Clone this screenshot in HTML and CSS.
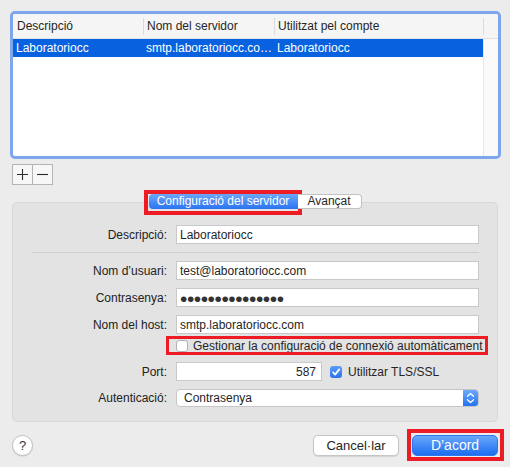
FILE: index.html
```html
<!DOCTYPE html>
<html>
<head>
<meta charset="utf-8">
<link rel="stylesheet" href="styles.css">
</head>
<body>
<div class="win">
  <div class="table">
    <div class="thead">
      <div class="th c1">Descripció</div>
      <div class="th c2">Nom del servidor</div>
      <div class="th c3">Utilitzat pel compte</div>
      <div class="th c4"></div>
    </div>
    <div class="tbody">
      <div class="rows">
        <div class="tr sel">
          <div class="td c1">Laboratoriocc</div>
          <div class="td c2">smtp.laboratoriocc.co…</div>
          <div class="td c3">Laboratoriocc</div>
        </div>
      </div>
      <div class="filler"></div>
    </div>
  </div>

  <div class="addrem">
    <div class="sq first">
      <svg width="11" height="11" viewBox="0 0 11 11"><path d="M5.5 0V11M0 5.5H11" stroke="#2a2a2a" stroke-width="1.1" fill="none"/></svg>
    </div>
    <div class="sq">
      <svg width="11" height="11" viewBox="0 0 11 11"><path d="M0 5.5H11" stroke="#2a2a2a" stroke-width="1.1" fill="none"/></svg>
    </div>
  </div>

  <div class="tabs">
    <div class="tab sel">Configuració del servidor</div>
    <div class="tab adv">Avançat</div>
  </div>

  <div class="box">
    <div class="row">
      <div class="lbl">Descripció:</div>
      <div class="field">Laboratoriocc</div>
    </div>
    <div class="sep"></div>
    <div class="row">
      <div class="lbl">Nom d’usuari:</div>
      <div class="field">test@laboratoriocc.com</div>
    </div>
    <div class="row mt8">
      <div class="lbl">Contrasenya:</div>
      <div class="field"><span class="dots">•••••••••••••••</span></div>
    </div>
    <div class="row mt8">
      <div class="lbl">Nom del host:</div>
      <div class="field">smtp.laboratoriocc.com</div>
    </div>
    <div class="row chkrow">
      <div class="lbl"></div>
      <div class="chkline">
        <span class="chk"></span>
        <span>Gestionar la configuració de connexió automàticament</span>
      </div>
    </div>
    <div class="row portrow">
      <div class="lbl">Port:</div>
      <div class="portline">
        <div class="field port">587</div>
        <span class="chk on">
          <svg width="12" height="12" viewBox="0 0 12 12"><path d="M3 6.3L5.1 8.6L9.2 3.4" stroke="#fff" stroke-width="1.7" fill="none" stroke-linecap="round" stroke-linejoin="round"/></svg>
        </span>
        <span class="tls">Utilitzar TLS/SSL</span>
      </div>
    </div>
    <div class="row mt8">
      <div class="lbl">Autenticació:</div>
      <div class="popup">
        <span class="ptext">Contrasenya</span>
        <span class="stepper">
          <svg width="15" height="16" viewBox="0 0 15 16"><path d="M4.5 6.2L7.5 3.4L10.5 6.2M4.5 9.8L7.5 12.6L10.5 9.8" stroke="#fff" stroke-width="1.3" fill="none" stroke-linecap="round" stroke-linejoin="round"/></svg>
        </span>
      </div>
    </div>
  </div>

  <div class="footer">
    <div class="help">?</div>
    <div class="spacer"></div>
    <div class="btn cancel">Cancel·lar</div>
    <div class="btn ok">D’acord</div>
  </div>

  <div class="mark m1"></div>
  <div class="mark m2"></div>
  <div class="mark m3"></div>
</div>
</body>
</html>
```
FILE: styles.css
```css
* { box-sizing: border-box; }
html, body { margin: 0; padding: 0; }
body {
  background: #ececec;
  font-family: "Liberation Sans", Arial, sans-serif;
  font-size: 12px;
  color: #262626;
}
.win {
  position: relative;
  width: 510px;
  height: 467px;
  overflow: hidden;
}

/* table */
.table {
  margin: 11px 0 0 10px;
  width: 491px;
  height: 148px;
  border: 3px solid #7ea6ec;
  border-radius: 5px;
  background: #fff;
  display: flex;
  flex-direction: column;
  overflow: hidden;
}
.thead {
  display: flex;
  align-items: center;
  height: 25px;
  flex: none;
  background: #f5f5f5;
  border-bottom: 1px solid #e1e1e1;
}
.th {
  height: 17px;
  line-height: 17px;
  white-space: nowrap;
}
.th.c1 { width: 130px; padding-left: 4px; }
.th.c2 { width: 131px; padding-left: 3px; border-left: 1px solid #dadada; }
.th.c3 { width: 209px; padding-left: 3px; border-left: 1px solid #dadada; }
.th.c4 { flex: 1; border-left: 1px solid #dadada; }
.tbody { flex: 1; display: flex; }
.rows { width: 470px; }
.filler { flex: 1; border-left: 1px solid #e6e6e6; background: #fafafa; }
.tr { display: flex; align-items: center; height: 18px; }
.tr.sel { background: #0862e0; color: #fff; }
.td { white-space: nowrap; overflow: hidden; padding-left: 3px; }
.td.c1 { width: 130px; }
.td.c2 { width: 131px; }
.td.c3 { width: 209px; }

/* add/remove */
.addrem { display: flex; margin: 5px 0 0 12px; }
.sq {
  width: 20px;
  height: 21px;
  border: 1px solid #b4b4b4;
  border-left: none;
  background: #f7f7f7;
  display: flex;
  align-items: center;
  justify-content: center;
}
.sq.first { width: 21px; border-left: 1px solid #b4b4b4; }

/* tabs */
.tabs {
  position: relative;
  z-index: 1;
  display: flex;
  justify-content: center;
  margin-top: 9px;
  height: 15px;
}
.tab { height: 15px; line-height: 15px; text-align: center; white-space: nowrap; }
.tab.sel {
  width: 149px;
  color: #fff;
  background: linear-gradient(#6aa7f9, #2b73f1);
  border-radius: 4px 0 0 4px;
}
.tab.adv {
  width: 64px;
  background: #fff;
  border: 1px solid #c2c2c2;
  border-left: none;
  border-radius: 0 4px 4px 0;
  line-height: 13px;
}

/* box */
.box {
  margin: -7px 12px 0;
  height: 220px;
  background: #e3e3e3;
  border: 1px solid #d7d7d7;
  border-radius: 5px;
  padding-top: 22px;
}
.row {
  display: grid;
  grid-template-columns: 154px 303px;
  column-gap: 9px;
  align-items: center;
}
.mt8 { margin-top: 8px; }
.lbl { text-align: right; white-space: nowrap; color: #222; }
.field {
  height: 19px;
  background: #fff;
  border: 1px solid #c9c9c9;
  padding: 0 3px;
  display: flex;
  align-items: center;
  white-space: nowrap;
}
.dots {
  font-size: 21px;
  letter-spacing: -0.45px;
  line-height: 0;
  color: #333;
  position: relative;
  top: 1px;
}
.sep { height: 1px; background: #cfcfcf; margin: 8px 18px 8px 19px; }
.chkrow { margin-top: 6px; height: 12px; }
.chkline { display: flex; align-items: center; gap: 5px; height: 12px; white-space: nowrap; }
.chk {
  width: 12px;
  height: 12px;
  flex: none;
  background: #fff;
  border: 1px solid #b3b3b3;
  border-radius: 3px;
  display: inline-flex;
}
.chk.on {
  border: none;
  background: linear-gradient(#5a9cf8, #2a72f0);
}
.portrow { margin-top: 10px; }
.portline { display: flex; align-items: center; }
.field.port { width: 146px; justify-content: flex-end; padding-right: 5px; }
.portline .chk { margin-left: 8px; }
.tls { margin-left: 6px; }
.popup {
  height: 18px;
  background: #fff;
  border: 1px solid #c6c6c6;
  border-radius: 4px;
  display: flex;
  align-items: center;
  overflow: hidden;
}
.ptext { padding-left: 7px; flex: 1; }
.stepper {
  width: 15px;
  height: 16px;
  background: linear-gradient(#6aa8f9, #2473f1);
  display: flex;
}

/* footer */
.footer { display: flex; align-items: center; margin: 13px 12px 0; }
.spacer { flex: 1; }
.help {
  width: 21px;
  height: 21px;
  border-radius: 50%;
  background: #fff;
  border: 1px solid #c4c4c4;
  box-shadow: 0 0.5px 1px rgba(0,0,0,0.15);
  text-align: center;
  line-height: 19px;
  font-size: 13px;
  color: #333;
}
.btn {
  width: 86px;
  height: 21px;
  border-radius: 5px;
  font-size: 13px;
  text-align: center;
  line-height: 19px;
}
.btn.cancel {
  background: #fff;
  border: 1px solid #c6c6c6;
  box-shadow: 0 0.5px 1px rgba(0,0,0,0.1);
  margin-right: 13px;
}
.btn.ok {
  color: #fff;
  font-size: 14px;
  background: linear-gradient(#69a7f9, #1c6df0);
  border: 1px solid #2f77ee;
}

/* annotation overlays */
.mark { position: absolute; border: 4px solid #ed1c24; }
.m1 { left: 144px; top: 190px; width: 158px; height: 25px; }
.m2 { left: 166px; top: 336px; width: 322px; height: 19px; border-width: 3px; }
.m3 { left: 407px; top: 429px; width: 97px; height: 32px; }
```
